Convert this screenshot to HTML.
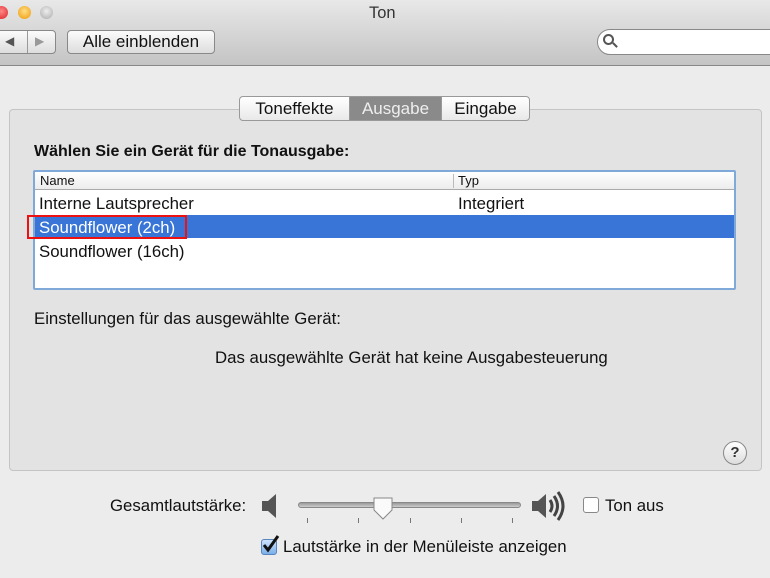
<!DOCTYPE html>
<html><head><style>
*{margin:0;padding:0;box-sizing:border-box}
body{width:770px;height:578px;overflow:hidden;background:#ececec;font-family:"Liberation Sans",sans-serif;font-size:16.8px;color:#111;position:relative}
.a{position:absolute;white-space:nowrap}
</style></head><body>
<div class="a" style="left:0;top:0;width:770px;height:66px;background:linear-gradient(#e8e8e8,#c4c4c4);border-bottom:1px solid #888"></div>
<div class="a" style="left:-5px;top:6px;width:13px;height:13px;border-radius:50%;background:radial-gradient(circle at 50% 40%,#f88,#d22)"></div>
<div class="a" style="left:18px;top:6px;width:13px;height:13px;border-radius:50%;background:radial-gradient(circle at 50% 40%,#fd8,#e90)"></div>
<div class="a" style="left:40px;top:6px;width:13px;height:13px;border-radius:50%;background:radial-gradient(circle at 50% 40%,#eee,#aaa)"></div>
<div class="a" style="left:369px;top:4px;font-size:16.5px;color:#333">Ton</div>
<div class="a" style="left:-4px;top:30px;width:60px;height:24px;border:1px solid #888;border-radius:4px;background:linear-gradient(#fbfbfb,#ddd)"></div>
<div class="a" style="left:27px;top:31px;width:1px;height:22px;background:#999"></div>
<div class="a" style="left:5px;top:34px;font-size:12px;color:#555">◀</div>
<div class="a" style="left:35px;top:34px;font-size:12px;color:#999">▶</div>
<div class="a" style="left:67px;top:30px;width:148px;height:24px;border:1px solid #888;border-radius:4px;background:linear-gradient(#fbfbfb,#ddd);text-align:center;line-height:22px;font-size:17px">Alle einblenden</div>
<div class="a" style="left:597px;top:29px;width:190px;height:26px;border:1px solid #888;border-radius:13px;background:#fff"></div>
<div class="a" style="left:603px;top:34px;width:11px;height:11px;border:2px solid #555;border-radius:50%"></div>
<div class="a" style="left:612px;top:44px;width:6px;height:2px;background:#555;transform:rotate(45deg)"></div>
<div class="a" style="left:9px;top:109px;width:753px;height:362px;background:#e3e3e3;border:1px solid #c4c4c4;border-radius:4px"></div>
<div class="a" style="left:239px;top:96px;width:291px;height:25px;border:1px solid #999;border-radius:4px;background:linear-gradient(#fff,#e9e9e9);overflow:hidden;display:flex;font-size:17px;line-height:23px">
<div style="width:110px;text-align:center;border-right:1px solid #999">Toneffekte</div>
<div style="width:92px;text-align:center;background:#8a8a8a;color:#eee;border-right:1px solid #999">Ausgabe</div>
<div style="flex:1;text-align:center">Eingabe</div></div>
<div class="a" style="left:34px;top:143px;font-weight:bold;font-size:16px">Wählen Sie ein Gerät für die Tonausgabe:</div>
<div class="a" style="left:33px;top:170px;width:703px;height:120px;background:#fff;border:2px solid #7fa9d8;border-radius:2px"></div>
<div class="a" style="left:35px;top:172px;width:699px;height:18px;background:linear-gradient(#fff,#ececec);border-bottom:1px solid #aaa;font-size:13px;line-height:18px">
<span class="a" style="left:5px">Name</span><span class="a" style="left:418px;top:2px;width:1px;height:14px;background:#bbb"></span><span class="a" style="left:423px">Typ</span></div>
<div class="a" style="left:39px;top:194px">Interne Lautsprecher</div>
<div class="a" style="left:458px;top:194px">Integriert</div>
<div class="a" style="left:35px;top:215px;width:699px;height:23px;background:#3875d7"></div>
<div class="a" style="left:39px;top:218px;color:#fff">Soundflower (2ch)</div>
<div class="a" style="left:27px;top:215px;width:160px;height:24px;border:2px solid #e11"></div>
<div class="a" style="left:39px;top:242px">Soundflower (16ch)</div>
<div class="a" style="left:34px;top:309px">Einstellungen für das ausgewählte Gerät:</div>
<div class="a" style="left:215px;top:348px">Das ausgewählte Gerät hat keine Ausgabesteuerung</div>
<div class="a" style="left:723px;top:441px;width:24px;height:24px;border:1px solid #888;border-radius:50%;background:linear-gradient(#fff,#ddd);text-align:center;line-height:22px;font-weight:bold;font-size:15px;color:#333">?</div>
<div class="a" style="left:110px;top:496px">Gesamtlautstärke:</div>
<svg class="a" style="left:260px;top:492px" width="20" height="28"><path d="M2 9h6l8-7v24l-8-7H2z" fill="#555"/></svg>
<div class="a" style="left:298px;top:502px;width:223px;height:6px;border-radius:3px;background:linear-gradient(#999,#ccc);border:1px solid #888"></div>
<svg class="a" style="left:371px;top:496px" width="24" height="26"><path d="M3 2h18v12l-9 9-9-9z" fill="#fafafa" stroke="#888"/></svg>
<div class="a" style="left:307px;top:518px;width:1px;height:5px;background:#777"></div>
<div class="a" style="left:358px;top:518px;width:1px;height:5px;background:#777"></div>
<div class="a" style="left:410px;top:518px;width:1px;height:5px;background:#777"></div>
<div class="a" style="left:461px;top:518px;width:1px;height:5px;background:#777"></div>
<div class="a" style="left:512px;top:518px;width:1px;height:5px;background:#777"></div>
<svg class="a" style="left:530px;top:488px" width="40" height="36"><path d="M2 13h6l8-7v24l-8-7H2z" fill="#555"/><path d="M20 12q4 6 0 12M24 8q7 10 0 20M28 4q10 14 0 28" fill="none" stroke="#444" stroke-width="3"/></svg>
<div class="a" style="left:583px;top:497px;width:16px;height:16px;border:1px solid #888;border-radius:3px;background:#fff"></div>
<div class="a" style="left:605px;top:496px">Ton aus</div>
<div class="a" style="left:261px;top:539px;width:16px;height:16px;border:1px solid #5a86c0;border-radius:3px;background:linear-gradient(#cfe3fb,#7aaee8)"></div>
<svg class="a" style="left:261px;top:534px" width="20" height="20"><path d="M3 11l4 5L17 2" fill="none" stroke="#111" stroke-width="3"/></svg>
<div class="a" style="left:283px;top:537px">Lautstärke in der Menüleiste anzeigen</div>
</body></html>
